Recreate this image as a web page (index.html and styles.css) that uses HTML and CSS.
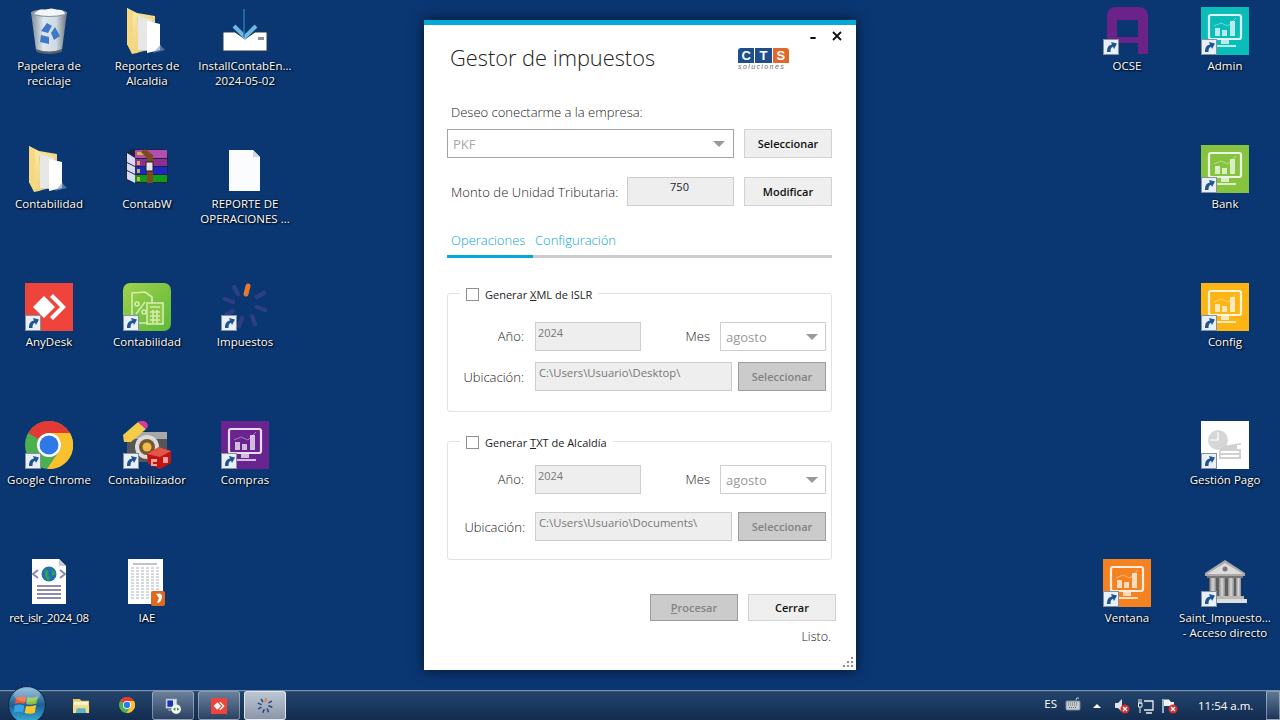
FILE: index.html
```html
<!DOCTYPE html>
<html lang="es">
<head>
<meta charset="utf-8">
<title>Gestor de impuestos</title>
<link rel="stylesheet" href="styles.css">
</head>
<body>
<svg class="sprite" xmlns="http://www.w3.org/2000/svg">
  <defs>
    <linearGradient id="gFolder" x1="0" y1="0" x2="1" y2="1"><stop offset="0" stop-color="#fdeeb0"/><stop offset="1" stop-color="#e8c565"/></linearGradient>
    <linearGradient id="gBin" x1="0" y1="0" x2="1" y2="0"><stop offset="0" stop-color="#7d8b96"/><stop offset=".35" stop-color="#dfe8ee"/><stop offset=".7" stop-color="#cfd9e0"/><stop offset="1" stop-color="#67737d"/></linearGradient>
    <linearGradient id="gGreen" x1="0" y1="0" x2="1" y2="1"><stop offset="0" stop-color="#a0d14a"/><stop offset="1" stop-color="#5cb83a"/></linearGradient>
    <linearGradient id="gOrb" x1="0" y1="0" x2="0" y2="1"><stop offset="0" stop-color="#7fb2d8"/><stop offset=".5" stop-color="#1d5f93"/><stop offset="1" stop-color="#39b4dc"/></linearGradient>
    <linearGradient id="gBank" x1="0" y1="0" x2="1" y2="0"><stop offset="0" stop-color="#8d8d8d"/><stop offset=".5" stop-color="#d8d8d8"/><stop offset="1" stop-color="#8a8a8a"/></linearGradient>
  </defs>
  <symbol id="shortcut" viewBox="0 0 16 16">
    <rect x=".5" y=".5" width="15" height="15" fill="#e9eff5" stroke="#84919e"/>
    <path d="M4 13 C4 8 6 6 9 5.500 L8 3 L14 4.500 L11 10 L10 7.800 C8 8.500 7.500 10 7.500 13 Z" fill="#1b5596"/>
  </symbol>
  <symbol id="folder" viewBox="0 0 48 48">
    <path d="M4 1 L14 6 L32 9 L32 40 L14 46 L9 47 L4 37 Z" fill="url(#gFolder)"/>
    <path d="M14 11 L29 14 L38 40 L18 45 Z" fill="#b9babc" opacity=".5"/>
    <path d="M15 9 L29 13 L29 44 L15 43 Z" fill="#e7e7e7"/>
    <path d="M24 14 L37 17 L37 43 L24 46 Z" fill="#fff"/>
    <path d="M4 1 L10 5 L10 47 L4 37 Z" fill="#f6d881"/>
    <path d="M37 38 L42 43 L30 46 Z" fill="#7d9fc9" opacity=".6"/>
  </symbol>
  <symbol id="anydesk" viewBox="0 0 48 48">
    <rect width="48" height="48" fill="#ef443b"/>
    <path d="M19 13 L30 24 L19 35 L8 24 Z" fill="#fff"/>
    <path d="M28 11 L41 24 L28 37 L25 34 L35 24 L25 14 Z" fill="#fff"/>
  </symbol>
  <symbol id="spinner" viewBox="0 0 48 48">
    <g stroke="#2a3f85" stroke-width="4.500" stroke-linecap="round">
      <line x1="36" y1="14" x2="43" y2="10"/>
      <line x1="36" y1="24" x2="44" y2="27"/>
      <line x1="31" y1="33" x2="34" y2="41"/>
      <line x1="21" y1="35" x2="18" y2="43"/>
      <line x1="12" y1="28" x2="5" y2="32"/>
      <line x1="12" y1="19" x2="4" y2="16"/>
      <line x1="17" y1="11" x2="13" y2="4"/>
    </g>
    <line x1="25" y1="11" x2="27" y2="3" stroke="#e8792b" stroke-width="5" stroke-linecap="round"/>
  </symbol>
  <symbol id="chrome" viewBox="0 0 48 48">
    <circle cx="24" cy="24" r="24" fill="#4caf50"/>
    <path d="M24 0 A24 24 0 0 1 45 12 L24 12 A12 12 0 0 0 13.600 18 L3.200 12 A24 24 0 0 1 24 0 Z" fill="#e53935"/>
    <path d="M45 12 A24 24 0 0 1 22 48 L34.400 30 A12 12 0 0 0 34.400 18 L24 12 Z" fill="#fbc02d"/>
    <circle cx="24" cy="24" r="12" fill="#fff"/>
    <circle cx="24" cy="24" r="9.500" fill="#2f79e6"/>
  </symbol>
  <symbol id="monitor" viewBox="0 0 48 48">
    <g fill="none" stroke="#fff" stroke-opacity=".85" stroke-width="2.200">
      <rect x="8" y="8" width="32" height="24" rx="2"/>
    </g>
    <g fill="#fff" fill-opacity=".7">
      <rect x="14" y="21" width="5" height="8"/>
      <rect x="21" y="23" width="5" height="6"/>
      <rect x="29" y="14" width="5" height="15"/>
      <rect x="20" y="33" width="8" height="4"/>
      <rect x="14" y="38" width="21" height="2"/>
    </g>
    <path d="M13 19 L20 16 L27 19 L35 11" fill="none" stroke="#fff" stroke-opacity=".4"/>
  </symbol>
</svg>

<main class="desktop">
  <section class="icons icons-left">
    <div class="item">
      <svg class="ico" viewBox="0 0 48 48"><path d="M6 5 L42 5 L37 43 Q24 48 11 43 Z" fill="url(#gBin)"/><ellipse cx="24" cy="6" rx="18" ry="4" fill="#8b98a3"/><path d="M9 7 Q14 1 20 3 Q27 0 32 3 Q38 2 40 7 Q24 11 9 7 Z" fill="#f2f6f8"/><path d="M16 24 L22 16 L27 19 L23 26 Z M30 20 L35 29 L29 33 L26 26 Z M16 28 L24 30 L24 37 L15 35 Z" fill="#3f77c9"/><path d="M11 42 Q24 47 37 42 L36.600 45 Q24 49 11.500 45 Z" fill="#59636b"/></svg>
      <p class="name">Papelera de<br>reciclaje</p>
    </div>
    <div class="item">
      <svg class="ico"><use href="#folder"/></svg>
      <p class="name">Contabilidad</p>
    </div>
    <div class="item">
      <div class="ico-wrap"><svg class="ico"><use href="#anydesk"/></svg><svg class="badge"><use href="#shortcut"/></svg></div>
      <p class="name">AnyDesk</p>
    </div>
    <div class="item">
      <div class="ico-wrap"><svg class="ico"><use href="#chrome"/></svg><svg class="badge"><use href="#shortcut"/></svg></div>
      <p class="name">Google Chrome</p>
    </div>
    <div class="item">
      <svg class="ico" viewBox="0 0 48 48"><path d="M7 0 H34 L41 7 V45 H7 Z" fill="#fff"/><path d="M34 0 L41 7 H34 Z" fill="#c7ccd4"/><path d="M13 11 L8 15 L13 19 M35 11 L40 15 L35 19" fill="none" stroke="#8f8aa8" stroke-width="2"/><circle cx="24" cy="15" r="7.500" fill="#1f6fb5"/><path d="M20 10 Q25 12 23 16 Q26 19 24 22 Q19 19 20 15 Z M27 10 L31 15 L27 17 Z" fill="#35a04a"/><g fill="#8e8ba8"><rect x="12" y="26" width="24" height="2"/><rect x="12" y="30" width="24" height="2"/><rect x="12" y="34" width="24" height="2"/><rect x="12" y="38" width="24" height="2"/></g></svg>
      <p class="name name-tight">ret_islr_2024_08</p>
    </div>

    <div class="item">
      <svg class="ico"><use href="#folder"/></svg>
      <p class="name">Reportes de<br>Alcaldia</p>
    </div>
    <div class="item">
      <svg class="ico" viewBox="0 0 48 48"><path d="M3 8 L9 4 H40 L45 10 V17 L43 19 L45 22 V29 L43 31 L45 33 V38 L42 38 H9 L3 34 Z" fill="#1c2440"/><path d="M4 8 L12 13 V21 L4 17 Z M4 18 L12 22 V29 L4 25 Z M4 26 L12 30 V38 L4 34 Z" fill="#d9dcf2"/><path d="M12 5 H44 V13 H12 Z" fill="#b04fb0"/><path d="M12 14 H44 V21 H12 Z" fill="#8c2f8f"/><path d="M12 22 H44 V29 H12 Z" fill="#1c28c4"/><path d="M12 30 H44 V37 H12 Z" fill="#119a1a"/><path d="M14 7 H22 V10 H14 Z" fill="#d0b545"/><path d="M14 16 H17 V20 H14 Z M14 24 H17 V28 H14 Z M14 32 H17 V36 H14 Z" fill="#c9b15a"/><path d="M22 4 L30 10 V38 H24 V13 L18 7 Z" fill="#7b4a1d"/><rect x="23" y="17" width="7" height="9" fill="#e4e4e4" stroke="#222"/></svg>
      <p class="name">ContabW</p>
    </div>
    <div class="item">
      <div class="ico-wrap"><svg class="ico" viewBox="0 0 48 48"><rect x="0" y="0" width="48" height="48" rx="7" fill="url(#gGreen)"/><g fill="none" stroke="#d4eeb0" stroke-width="1.600"><path d="M9 10 L22 9 L29 14 V40 L11 40 L9 34 Z"/><rect x="24" y="20" width="16" height="21" fill="#8ec946"/><path d="M27 24 H37 M27 29 H37 M27 33 H37 M27 37 H37 M30 27 V40 M34 27 V40"/><circle cx="14" cy="21" r="2"/><circle cx="21" cy="29" r="2"/><path d="M22 19 L13 31"/></g></svg><svg class="badge"><use href="#shortcut"/></svg></div>
      <p class="name">Contabilidad</p>
    </div>
    <div class="item">
      <div class="ico-wrap"><svg class="ico" viewBox="0 0 48 48"><path d="M4 11 H44 V41 H4 Z" fill="#565656"/><path d="M4 11 H44 V18 H4 Z" fill="#a8a8a8"/><circle cx="24" cy="26" r="12" fill="#dcdcdc"/><circle cx="24" cy="26" r="8" fill="#75592c"/><circle cx="24" cy="26" r="4.500" fill="#f3bb4d"/><path d="M0 14 L15 1 L23 8 L8 21 L1 21 Z" fill="#f3cd4a"/><path d="M15 1 Q20 -2 24 2 Q26 6 23 8 Z" fill="#d93a9c"/><path d="M24 33 L36 26 L48 30 V42 L37 48 L25 43 Z" fill="#c21414"/><path d="M24 33 L36 26 L48 30 L37 36 Z" fill="#e2564a"/><path d="M28 38 H34 V41 H30 V43 H34 V45 H28 Z M40 36 H45 V42 H40 Z" fill="#f3a39a"/></svg><svg class="badge"><use href="#shortcut"/></svg></div>
      <p class="name">Contabilizador</p>
    </div>
    <div class="item">
      <svg class="ico" viewBox="0 0 48 48"><path d="M5 0 H40 V45 H5 Z" fill="#fff"/><path d="M10 5 H34" stroke="#888"/><g stroke="#aab0b8" stroke-dasharray="3 2"><path d="M8 9 H37 M8 12 H37 M8 15 H37 M8 18 H37 M8 21 H37 M8 24 H37 M8 27 H37 M8 30 H37 M8 33 H37 M8 36 H37 M8 39 H37"/></g><rect x="28" y="32" width="14" height="15" rx="2" fill="#dd6a1e"/><path d="M33 35 Q39 33 39 38 Q38 44 34 44 L36 39 Z" fill="#fff"/></svg>
      <p class="name">IAE</p>
    </div>

    <div class="item">
      <svg class="ico" viewBox="0 0 48 48"><path d="M2 25 H14 L24 32 L34 25 H46 V44 H2 Z" fill="#fff" stroke="#2b3a4a"/><path d="M13 19 L24 30 L35 19" fill="none" stroke="#6fb6e0" stroke-width="4"/><line x1="23" y1="2" x2="23" y2="30" stroke="#1f7ab8" stroke-width="1.500"/><rect x="37" y="30" width="6" height="3" fill="#8a8f95"/></svg>
      <p class="name">InstallContabEn...<br>2024-05-02</p>
    </div>
    <div class="item">
      <svg class="ico" viewBox="0 0 48 48"><path d="M8 5 H32 L39 12 V46 H8 Z" fill="#fbfcfd"/><path d="M32 5 L39 12 H32 Z" fill="#cfd6dd"/></svg>
      <p class="name">REPORTE DE<br>OPERACIONES ...</p>
    </div>
    <div class="item">
      <div class="ico-wrap"><svg class="ico"><use href="#spinner"/></svg><svg class="badge"><use href="#shortcut"/></svg></div>
      <p class="name">Impuestos</p>
    </div>
    <div class="item">
      <div class="ico-wrap ico-compras"><svg class="ico"><use href="#monitor"/></svg><svg class="badge"><use href="#shortcut"/></svg></div>
      <p class="name">Compras</p>
    </div>
  </section>

  <section class="icons icons-right">
    <div class="item">
      <div class="ico-wrap"><svg class="ico" viewBox="0 0 48 48"><path fill-rule="evenodd" d="M4 47 V9 Q4 0 14 0 H35 Q45 0 45 9 V47 H35 V36 H14 V47 Z M14 13 V30 H35 V13 Z" fill="#6b2289"/></svg><svg class="badge"><use href="#shortcut"/></svg></div>
      <p class="name">OCSE</p>
    </div>
    <div class="item"></div>
    <div class="item"></div>
    <div class="item"></div>
    <div class="item">
      <div class="ico-wrap ico-ventana"><svg class="ico"><use href="#monitor"/></svg><svg class="badge"><use href="#shortcut"/></svg></div>
      <p class="name">Ventana</p>
    </div>

    <div class="item">
      <div class="ico-wrap ico-admin"><svg class="ico"><use href="#monitor"/></svg><svg class="badge"><use href="#shortcut"/></svg></div>
      <p class="name">Admin</p>
    </div>
    <div class="item">
      <div class="ico-wrap ico-bank"><svg class="ico"><use href="#monitor"/></svg><svg class="badge"><use href="#shortcut"/></svg></div>
      <p class="name">Bank</p>
    </div>
    <div class="item">
      <div class="ico-wrap ico-config"><svg class="ico"><use href="#monitor"/></svg><svg class="badge"><use href="#shortcut"/></svg></div>
      <p class="name">Config</p>
    </div>
    <div class="item">
      <div class="ico-wrap"><svg class="ico" viewBox="0 0 48 48"><rect width="48" height="48" fill="#fff"/><circle cx="17" cy="19" r="10" fill="#d6d6d6"/><path d="M17 11 V19 H9" fill="none" stroke="#fff" stroke-width="1.200"/><path d="M22 25 L40 22 V38 H18 V30 Z" fill="#d0d0d0"/><rect x="20" y="30" width="18" height="2" fill="#fff"/><rect x="20" y="34" width="18" height="2" fill="#fff"/><rect x="36" y="24" width="4" height="4" fill="#fff"/></svg><svg class="badge"><use href="#shortcut"/></svg></div>
      <p class="name">Gestión Pago</p>
    </div>
    <div class="item">
      <div class="ico-wrap"><svg class="ico" viewBox="0 0 48 48"><path d="M4 14 L24 1 L44 14 V17 H4 Z" fill="#a9a9a9"/><path d="M6 15 L24 4 L42 15 Z" fill="#dcdcdc"/><circle cx="24" cy="10" r="2.500" fill="#777"/><rect x="6" y="17" width="36" height="2" fill="#777"/><rect x="8" y="19" width="32" height="18" fill="#5f5f5f"/><g fill="url(#gBank)"><rect x="9" y="19" width="6" height="18"/><rect x="18" y="19" width="6" height="18"/><rect x="27" y="19" width="6" height="18"/><rect x="35" y="19" width="5" height="18"/></g><rect x="6" y="37" width="37" height="3" fill="#b9b9b9"/><rect x="3" y="40" width="43" height="4" fill="#dedede"/></svg><svg class="badge"><use href="#shortcut"/></svg></div>
      <p class="name">Saint_Impuesto...<br>- Acceso directo</p>
    </div>
  </section>

  <article class="window">
    <svg class="win-min" viewBox="0 0 8 3"><rect width="8" height="3" fill="#111"/></svg>
    <svg class="win-close" viewBox="0 0 10 10"><path d="M1 1 L9 9 M9 1 L1 9" stroke="#111" stroke-width="1.800"/></svg>

    <header class="head">
      <h1 class="title">Gestor de impuestos</h1>
      <div class="logo">
        <div class="logo-blocks"><span class="lb lb-c">C</span><span class="lb">T</span><span class="lb lb-s">S</span></div>
        <div class="logo-sub">soluciones</div>
      </div>
    </header>

    <p class="lead">Deseo conectarme a la empresa:</p>
    <div class="row row-company">
      <div class="select select-main"><span>PKF</span><i class="arrow"></i></div>
      <button class="btn">Seleccionar</button>
    </div>
    <div class="row row-ut">
      <span class="lead lead-inline">Monto de Unidad Tributaria:</span>
      <div class="field field-ut">750</div>
      <button class="btn">Modificar</button>
    </div>

    <nav class="tabs">
      <span class="tab tab-active">Operaciones</span>
      <span class="tab tab-two">Configuración</span>
    </nav>

    <fieldset class="group group-a">
      <legend class="legend"><i class="check"></i><span>Generar <u>X</u>ML de ISLR</span></legend>
      <div class="frow frow-top">
        <span class="flabel">Año:</span>
        <div class="field field-year">2024</div>
        <span class="flabel-mes">Mes</span>
        <div class="select select-mes"><span>agosto</span><i class="arrow"></i></div>
      </div>
      <div class="frow frow-a2">
        <span class="flabel">Ubicación:</span>
        <div class="field field-path">C:\Users\Usuario\Desktop\</div>
        <button class="btn btn-off btn-path">Seleccionar</button>
      </div>
    </fieldset>

    <fieldset class="group group-b">
      <legend class="legend"><i class="check"></i><span>Generar <u>T</u>XT de Alcaldía</span></legend>
      <div class="frow frow-top">
        <span class="flabel">Año:</span>
        <div class="field field-year">2024</div>
        <span class="flabel-mes">Mes</span>
        <div class="select select-mes"><span>agosto</span><i class="arrow"></i></div>
      </div>
      <div class="frow frow-b2">
        <span class="flabel flabel-b">Ubicación:</span>
        <div class="field field-path">C:\Users\Usuario\Documents\</div>
        <button class="btn btn-off btn-path">Seleccionar</button>
      </div>
    </fieldset>

    <div class="actions">
      <button class="btn btn-off btn-act"><u>P</u>rocesar</button>
      <button class="btn btn-act">Cerrar</button>
    </div>
    <p class="status">Listo.</p>
    <svg class="grip" viewBox="0 0 10 10"><g fill="#8a8a8a"><rect x="8" y="0" width="2" height="2"/><rect x="4" y="4" width="2" height="2"/><rect x="8" y="4" width="2" height="2"/><rect x="0" y="8" width="2" height="2"/><rect x="4" y="8" width="2" height="2"/><rect x="8" y="8" width="2" height="2"/></g></svg>
  </article>
</main>

<footer class="taskbar">
  <svg class="orb" viewBox="0 0 38 38">
    <circle cx="19" cy="19" r="18.500" fill="url(#gOrb)" stroke="#10263f"/>
    <path d="M8 12 Q13 9 18 11 L16.500 18 Q12 16 7 18 Z" fill="#f0582e"/>
    <path d="M19.500 11 Q25 13 30 10 L28.500 17.500 Q23 19.500 18.200 18 Z" fill="#8ac43f"/>
    <path d="M6.700 19.500 Q12 17.500 16.300 19.500 L15 26.500 Q10.500 25 5.500 27 Z" fill="#35a3e6"/>
    <path d="M18 20 Q23 21 28.200 19 L26.700 27 Q21.500 28.500 16.700 27 Z" fill="#f8c52c"/>
    <ellipse cx="19" cy="9" rx="13" ry="7" fill="#fff" opacity=".22"/>
  </svg>
  <svg class="pin pin-folder" viewBox="0 0 20 18"><path d="M1 2 H8 L10 4 H18 V16 H1 Z" fill="#e9c964"/><rect x="2" y="5" width="15" height="4" fill="#f8f3d5"/><path d="M1 9 H18 V17 H1 Z" fill="#f6db82"/><path d="M5 12 H14 L15 17 H4 Z" fill="#5eb0cf"/></svg>
  <svg class="pin pin-chrome"><use href="#chrome"/></svg>
  <div class="task">
    <svg class="task-ico" viewBox="0 0 20 20"><rect x="1" y="1" width="14" height="12" fill="#e0e4ea" stroke="#7a7f88"/><rect x="3" y="3" width="7" height="8" fill="#1133c0"/><rect x="4" y="14" width="8" height="2" fill="#9aa0a8"/><circle cx="14" cy="14" r="6" fill="#f0f3ee"/><path d="M10 14 L13 12 V16 Z M18 14 L15 12 V16 Z" fill="#2f8f3a"/></svg>
  </div>
  <div class="task">
    <svg class="task-ico"><use href="#anydesk"/></svg>
  </div>
  <div class="task task-active">
    <svg class="task-ico"><use href="#spinner"/></svg>
  </div>
  <div class="tray">
    <span class="tray-lang">ES</span>
    <svg class="tray-kb" viewBox="0 0 16 14"><path d="M11 3 Q11 0 14 1" fill="none" stroke="#c7ccd2"/><rect x="1" y="4" width="14" height="9" rx="1" fill="#c6ccd2" stroke="#7f8891"/><path d="M3 6 H13 M3 8 H13 M4 10.500 H12" stroke="#5f6870" stroke-dasharray="1 1"/></svg>
    <i class="tray-caret"></i>
    <svg class="tray-ic tray-sound" viewBox="0 0 16 16"><path d="M1 5 H4 L8 1 V14 L4 10 H1 Z" fill="#dfe4e8"/><circle cx="11" cy="11" r="4.500" fill="#d0312d"/><path d="M9 9 L13 13 M13 9 L9 13" stroke="#fff" stroke-width="1.300"/></svg>
    <svg class="tray-ic tray-net" viewBox="0 0 16 16"><path d="M1 1 V6 M3 1 V6 M0.500 5 H4 V9 H0.500 Z M2 9 V15" stroke="#e8edf1" fill="none"/><path d="M6 3 H15 V12 H6 M8 15 H14" stroke="#e8edf1" stroke-width="1.300" fill="none"/></svg>
    <svg class="tray-ic tray-flag" viewBox="0 0 16 16"><path d="M1 1 V15" stroke="#e8edf1" stroke-width="1.300"/><path d="M2 1.500 H7 L9 4 H12 V8 H4 L2 8 Z" fill="#eef2f5"/><circle cx="11" cy="11" r="4.500" fill="#d0312d"/><path d="M9 9 L13 13 M13 9 L9 13" stroke="#fff" stroke-width="1.300"/></svg>
    <span class="tray-time">11:54 a.m.</span>
    <div class="show-desktop"></div>
  </div>
</footer>
</body>
</html>
```
FILE: styles.css
```css
* { box-sizing: border-box; }
html, body { margin: 0; padding: 0; }
body {
  width: 1280px;
  height: 720px;
  overflow: hidden;
  background: #0a3672;
  font-family: "Open Sans", "Noto Sans", sans-serif;
  display: flex;
  flex-direction: column;
}
.sprite { position: absolute; width: 0; height: 0; }

/* desktop */
.desktop {
  position: relative;
  flex: none;
  height: 690px;
  display: flex;
  justify-content: space-between;
  padding: 7px 6px 0 0;
}
.icons {
  display: grid;
  grid-auto-flow: column;
  grid-template-rows: repeat(5, 138px);
  grid-auto-columns: 98px;
  height: 690px;
}
.item {
  display: flex;
  flex-direction: column;
  align-items: center;
}
.ico { display: block; width: 48px; height: 48px; }
.ico-wrap { position: relative; width: 48px; height: 48px; }
.badge { position: absolute; left: 0; bottom: 0; width: 16px; height: 16px; }
.ico-compras { background: #6a2490; }
.ico-admin { background: #0bbdb9; }
.ico-bank { background: #86c440; }
.ico-config { background: #fdb515; }
.ico-ventana { background: #f58220; }
.name {
  margin: 3px 0 0;
  width: 98px;
  text-align: center;
  white-space: nowrap;
  color: #fff;
  font-size: 11.5px;
  line-height: 15px;
  text-shadow: 1px 1px 2px #000, 0 0 2px rgba(0, 0, 0, .8);
}
.name-tight { letter-spacing: -.4px; }

/* window */
.window {
  position: absolute;
  left: 424px;
  top: 20px;
  width: 432px;
  height: 650px;
  background: #fff;
  border-top: 5px solid #03a9d9;
  padding: 20px 24px 0 23px;
  box-shadow: 0 0 12px rgba(0, 0, 0, .65);
  color: #222;
}
.win-min { position: absolute; left: 385px; top: 12px; width: 8px; height: 2px; }
.win-close { position: absolute; left: 408px; top: 6px; width: 10px; height: 10px; }
.head {
  display: flex;
  justify-content: space-between;
  height: 28px;
  padding: 0 43px 0 3px;
}
.title {
  margin: 0;
  font-size: 21.8px;
  line-height: 26px;
  font-weight: 300;
  color: #222;
  white-space: nowrap;
}
.logo { width: 51px; margin-top: 3px; }
.logo-blocks { display: flex; height: 15px; gap: 1px; }
.lb {
  flex: 1;
  background: #1e4f8c;
  color: #fff;
  font: bold 13px/15px "Liberation Sans", sans-serif;
  text-align: center;
}
.lb-c { border-radius: 3px 0 0 0; }
.lb-s { background: #e2672b; border-radius: 0 3px 0 0; }
.logo-sub {
  font: italic 7px/8px "Liberation Sans", sans-serif;
  letter-spacing: 1.400px;
  color: #6a6a6a;
  white-space: nowrap;
}
.lead {
  margin: 29px 0 0 4px;
  font-size: 13px;
  line-height: 20px;
  font-weight: 300;
  color: #222;
  white-space: nowrap;
}
.lead-inline { margin: 0 9px 0 4px; flex: none; width: 167px; letter-spacing: .08px; }
.row { display: flex; align-items: stretch; height: 29px; }
.row-company { margin-top: 7px; gap: 10px; }
.row-ut { margin-top: 19px; align-items: center; }
.select {
  display: flex;
  align-items: center;
  justify-content: space-between;
  background: #fff;
  font-size: 13px;
  color: #a8a8a8;
}
.select-main { width: 287px; height: 29px; border: 1px solid #a3a3a3; padding: 0 8px 0 5px; }
.select-mes { flex: none; width: 106px; height: 29px; border: 1px solid #cfcfcf; margin-left: 10px; padding: 0 7px 0 5px; color: #999; }
.arrow { width: 0; height: 0; border-style: solid; border-width: 6px 6px 0; border-color: #9a9a9a transparent transparent; }
.btn {
  flex: none;
  width: 88px;
  height: 29px;
  padding: 0;
  background: #efefef;
  border: 1px solid #d2d2d2;
  font: 600 11px/1 "Open Sans", sans-serif;
  color: #111;
}
.btn-off { background: #cbcbcb; border-color: #9c9c9c; color: #838383; }
.field {
  flex: none;
  height: 29px;
  background: #eee;
  border: 1px solid #cdcdcd;
  font-size: 11px;
  line-height: 16px;
  color: #777;
  padding: 2px 0 0 2px;
  white-space: nowrap;
}
.field-ut { width: 107px; margin-right: 10px; text-align: center; color: #222; padding: 1px 2px 0 0; }
.field-year { width: 106px; margin-left: 11px; }
.field-path { width: 197px; margin-left: 11px; padding-left: 3px; font-size: 11.3px; }
.tabs {
  display: flex;
  height: 28px;
  margin-top: 24px;
  border-bottom: 3px solid #ccc;
  font-size: 13px;
  line-height: 20px;
  font-weight: 300;
  color: #0aa5d4;
}
.tab { height: 28px; white-space: nowrap; }
.tab-active { width: 86px; padding-left: 4px; border-bottom: 3px solid #03a9d9; }
.tab-two { padding-left: 2px; }
.group {
  margin: 0;
  padding: 0;
  min-width: 0;
  border: 1px solid #dde3e8;
  border-radius: 3px;
}
.group-a { height: 127px; margin-top: 27px; padding-top: 21px; }
.group-b { height: 127px; margin-top: 21px; padding-top: 16px; }
.legend {
  display: flex;
  align-items: center;
  height: 16px;
  margin-left: 12px;
  padding: 2px 6px 0;
  font-size: 11px;
  color: #222;
  white-space: nowrap;
}
.check {
  width: 13px;
  height: 13px;
  margin-right: 6px;
  border: 1px solid #8f8f8f;
  background: #fff;
}
.frow { display: flex; align-items: center; height: 29px; }
.frow-a2 { margin-top: 11px; }
.frow-b2 { margin-top: 18px; }
.frow-top .flabel, .frow-top .flabel-mes { margin-top: -2px; }
.flabel {
  flex: none;
  width: 76px;
  text-align: right;
  font-size: 13px;
  font-weight: 300;
  color: #222;
}
.flabel-b { width: 77px; margin-right: -1px; }
.flabel-mes {
  flex: none;
  width: 69px;
  text-align: right;
  font-size: 13px;
  font-weight: 300;
  color: #222;
}
.btn-path { margin-left: 6px; }
.actions {
  display: flex;
  justify-content: flex-end;
  gap: 10px;
  margin: 34px -4px 0 0;
}
.btn-act { height: 27px; }
.status {
  margin: 6px 1px 0 0;
  text-align: right;
  font-size: 12.5px;
  line-height: 20px;
  font-weight: 300;
  color: #222;
}
.grip { position: absolute; right: 3px; bottom: 3px; width: 10px; height: 10px; }

/* taskbar */
.taskbar {
  position: relative;
  flex: none;
  height: 30px;
  display: flex;
  background: linear-gradient(#23446c, #132c50);
  border-top: 1px solid #7d93ab;
  box-shadow: inset 0 1px 0 rgba(255, 255, 255, .08);
}
.orb {
  position: absolute;
  left: 8px;
  top: -5px;
  width: 38px;
  height: 38px;
}
.pin { flex: none; }
.pin-folder { width: 19px; height: 17px; margin: 6px 0 0 72px; }
.pin-chrome { width: 16px; height: 16px; margin: 6px 0 0 28px; }
.task {
  flex: none;
  display: flex;
  justify-content: center;
  align-items: center;
  width: 42px;
  height: 29px;
  margin-left: 4px;
  border: 1px solid rgba(255, 255, 255, .35);
  border-radius: 3px;
  background: linear-gradient(rgba(255, 255, 255, .32), rgba(255, 255, 255, .1));
}
.pin-chrome + .task { margin-left: 17px; }
.task-active { background: linear-gradient(rgba(255, 255, 255, .7), rgba(255, 255, 255, .5)); border-color: rgba(255, 255, 255, .7); }
.task-ico { width: 16px; height: 16px; }
.tray {
  margin-left: auto;
  display: flex;
  align-items: center;
  height: 29px;
  color: #fff;
  font-size: 11.500px;
}
.tray-lang { margin-top: -4px; }
.tray-kb { width: 16px; height: 14px; margin: -3px 0 0 8px; }
.tray-caret {
  width: 0; height: 0;
  margin: 0 0 0 12px;
  border-style: solid;
  border-width: 0 4px 4px;
  border-color: transparent transparent #fff;
}
.tray-ic { width: 16px; height: 16px; }
.tray-sound { margin-left: 13px; }
.tray-net { margin-left: 8px; }
.tray-flag { margin-left: 8px; }
.tray-time { margin-left: 20px; width: 68px; white-space: nowrap; }
.show-desktop {
  width: 14px;
  height: 29px;
  border: 1px solid rgba(255, 255, 255, .4);
  background: linear-gradient(rgba(255, 255, 255, .28), rgba(255, 255, 255, .04));
}
```
